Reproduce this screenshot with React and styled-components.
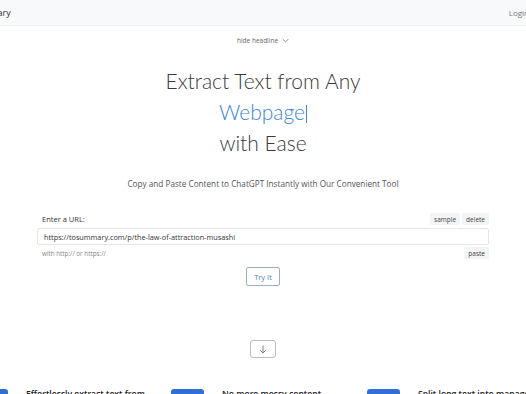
import React from "react";
import styled, { createGlobalStyle } from "styled-components";

const GlobalStyle = createGlobalStyle`
  html, body {
    margin: 0;
    padding: 0;
    background: #fff;
    overflow: hidden;
  }
  body {
    font-family: "Open Sans", "Noto Sans", sans-serif;
    color: #212529;
  }
`;

const Page = styled.div`
  width: 526px;
  height: 394px;
  overflow: hidden;
`;

const Navbar = styled.nav`
  height: 26px;
  margin: 0 -3px 0 -40px;
  display: flex;
  align-items: center;
  justify-content: space-between;
  background: #f8f9fa;
  border-bottom: 1px solid #ececec;
  box-sizing: border-box;
`;

const Brand = styled.span`
  font-size: 9px;
  color: #333;
`;

const NavLink = styled.span`
  font-size: 8px;
  color: #777;
`;

const Main = styled.main`
  display: flex;
  flex-direction: column;
  align-items: center;
`;

const HideToggle = styled.div`
  margin-top: 10px;
  display: flex;
  align-items: center;
  gap: 4px;
  font-size: 6.5px;
  color: #666;
`;

const Headline = styled.h1`
  margin: 20px 0 0;
  font-family: Lato, "Open Sans", sans-serif;
  font-weight: 300;
  font-size: 21px;
  line-height: 31px;
  text-align: center;
  color: #3a3a3a;
`;

const Highlight = styled.span`
  color: #3e86d8;
`;

const Caret = styled.span`
  display: inline-block;
  width: 1px;
  height: 18px;
  margin-left: 1px;
  vertical-align: -3px;
  background: #3e86d8;
`;

const Subtitle = styled.p`
  margin: 20px 0 0;
  font-size: 8.2px;
  color: #555;
`;

const Form = styled.div`
  width: 452px;
  margin-top: 24px;
  display: flex;
  flex-direction: column;
`;

const Row = styled.div`
  display: flex;
  align-items: center;
  justify-content: space-between;
  margin-top: ${(p) => p.$gap || 0}px;
`;

const Label = styled.span`
  font-size: 7.5px;
  color: #333;
  padding-left: 5px;
`;

const SmallButtons = styled.div`
  display: flex;
  gap: 2px;
`;

const SmallButton = styled.button`
  border: none;
  background: #f3f4f5;
  font-family: inherit;
  font-size: 6.5px;
  color: #444;
  height: 12px;
  padding: 0 4px;
  border-radius: 2px;
`;

const UrlInput = styled.div`
  margin-top: 3px;
  height: 17px;
  box-sizing: border-box;
  border: 1px solid #e6e6e6;
  border-radius: 2px;
  padding: 0 6px;
  display: flex;
  align-items: center;
  font-size: 7.3px;
  color: #333;
`;

const Help = styled.span`
  font-size: 6.3px;
  color: #888;
  padding-left: 5px;
`;

const TryButton = styled.button`
  margin-top: 8px;
  height: 19px;
  padding: 0 7px;
  background: #fff;
  border: 1px solid #9bb0c6;
  border-radius: 2px;
  font-family: inherit;
  font-size: 7.5px;
  color: #4a7fb8;
`;

const ArrowButton = styled.button`
  margin-top: 54px;
  width: 26px;
  height: 18px;
  padding: 0;
  background: #fff;
  border: 1px solid #bdbdbd;
  border-radius: 3px;
  display: flex;
  align-items: center;
  justify-content: center;
  color: #777;
`;

const Features = styled.section`
  margin: 31px 0 0 -25px;
  display: grid;
  grid-template-columns: repeat(3, 196px);
`;

const Feature = styled.div`
  display: flex;
  gap: 18px;
`;

const FeatureIcon = styled.div`
  width: 33px;
  height: 30px;
  flex-shrink: 0;
  border-radius: 3px;
  background: #2f6fd6;
`;

const FeatureTitle = styled.span`
  font-size: 8.6px;
  font-weight: 600;
  color: #222;
  white-space: nowrap;
  margin-top: -1px;
`;

const features = [
  "Effortlessly extract text from",
  "No more messy content",
  "Split long text into manageable",
];

export default function App() {
  return (
    <Page>
      <GlobalStyle />
      <Navbar>
        <Brand>ToSummary</Brand>
        <NavLink>Login</NavLink>
      </Navbar>
      <Main>
        <HideToggle>
          hide headline
          <svg width="7" height="5" viewBox="0 0 10 6" fill="none" stroke="#666" strokeWidth="1">
            <path d="M1 1l4 4 4-4" />
          </svg>
        </HideToggle>
        <Headline>
          Extract Text from Any
          <br />
          <Highlight>
            Webpage
            <Caret />
          </Highlight>
          <br />
          with Ease
        </Headline>
        <Subtitle>Copy and Paste Content to ChatGPT Instantly with Our Convenient Tool</Subtitle>
        <Form>
          <Row>
            <Label>Enter a URL:</Label>
            <SmallButtons>
              <SmallButton>sample</SmallButton>
              <SmallButton>delete</SmallButton>
            </SmallButtons>
          </Row>
          <UrlInput>https://tosummary.com/p/the-law-of-attraction-musashi</UrlInput>
          <Row $gap={2}>
            <Help>with http:// or https://</Help>
            <SmallButton>paste</SmallButton>
          </Row>
        </Form>
        <TryButton>Try It</TryButton>
        <ArrowButton>
          <svg width="8" height="9" viewBox="0 0 8 9" fill="none" stroke="#777" strokeWidth="0.9">
            <path d="M4 0.5v7.5M1.2 5.2L4 8l2.8-2.8" />
          </svg>
        </ArrowButton>
      </Main>
      <Features>
        {features.map((f) => (
          <Feature key={f}>
            <FeatureIcon />
            <FeatureTitle>{f}</FeatureTitle>
          </Feature>
        ))}
      </Features>
    </Page>
  );
}
